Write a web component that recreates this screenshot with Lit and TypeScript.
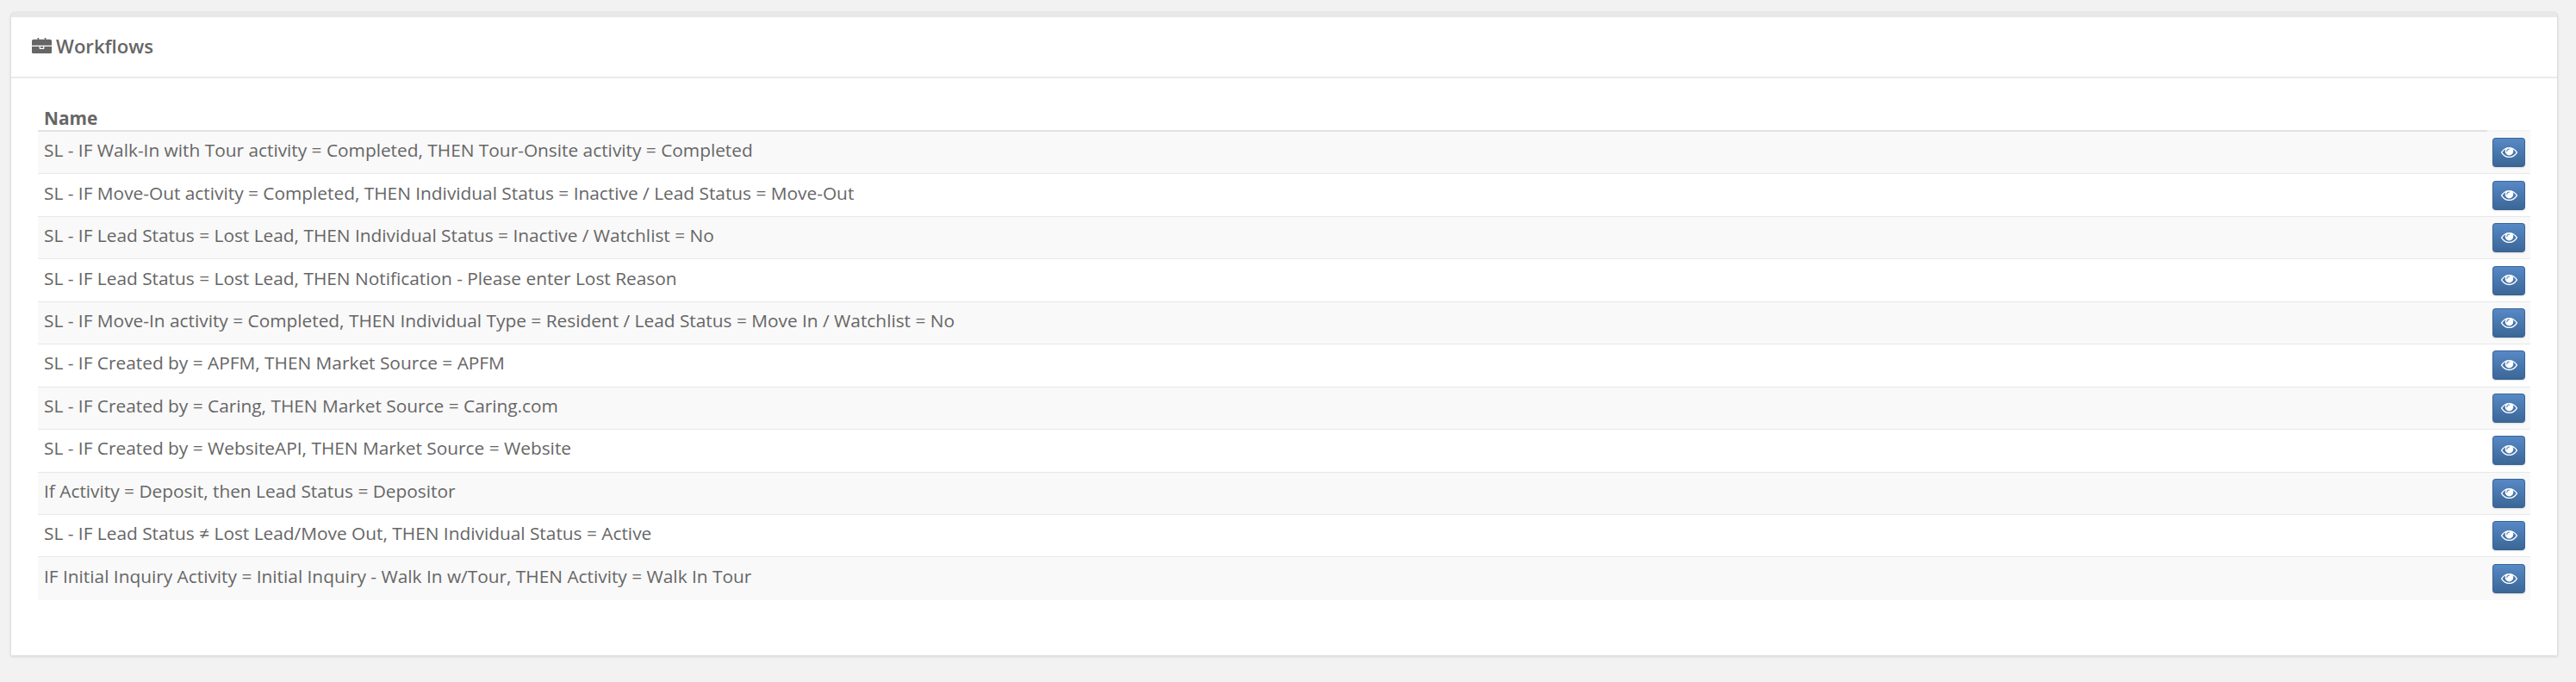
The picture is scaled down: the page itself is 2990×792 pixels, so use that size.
import { LitElement, css, html } from "lit";
import { customElement } from "lit/decorators.js";

const WORKFLOWS = [
  "SL - IF Walk-In with Tour activity = Completed, THEN Tour-Onsite activity = Completed",
  "SL - IF Move-Out activity = Completed, THEN Individual Status = Inactive / Lead Status = Move-Out",
  "SL - IF Lead Status = Lost Lead, THEN Individual Status = Inactive / Watchlist = No",
  "SL - IF Lead Status = Lost Lead, THEN Notification - Please enter Lost Reason",
  "SL - IF Move-In activity = Completed, THEN Individual Type = Resident / Lead Status = Move In / Watchlist = No",
  "SL - IF Created by = APFM, THEN Market Source = APFM",
  "SL - IF Created by = Caring, THEN Market Source = Caring.com",
  "SL - IF Created by = WebsiteAPI, THEN Market Source = Website",
  "If Activity = Deposit, then Lead Status = Depositor",
  "SL - IF Lead Status ≠ Lost Lead/Move Out, THEN Individual Status = Active",
  "IF Initial Inquiry Activity = Initial Inquiry - Walk In w/Tour, THEN Activity = Walk In Tour",
];

const briefcase = html`<svg class="case" viewBox="0 128 1792 1408" preserveAspectRatio="none" aria-hidden="true">
  <path fill="currentColor" d="M640 256h512v-128h-512v128zm1152 640v480q0 66-47 113t-113 47h-1472q-66 0-113-47t-47-113v-480h672v160q0 26 19 45t45 19h320q26 0 45-19t19-45v-160h672zm-768 0v128h-256v-128h256zm768-480v384h-1792v-384q0-66 47-113t113-47h352v-160q0-40 28-68t68-28h576q40 0 68 28t28 68v160h352q66 0 113 47t47 113z"/>
</svg>`;

const eye = html`<svg class="eye" viewBox="0 384 1792 1152" aria-hidden="true">
  <path fill="currentColor" d="M1664 960q-152-236-381-353 61 104 61 225 0 185-131.5 316.5t-316.5 131.5-316.5-131.5-131.5-316.5q0-121 61-225-229 117-381 353 133 205 333.5 326.5t434.5 121.5 434.5-121.5 333.5-326.5zm-720-384q0-20-14-34t-34-14q-125 0-214.5 89.5t-89.5 214.5q0 20 14 34t34 14 34-14 14-34q0-86 61-147t147-61q20 0 34-14t14-34zm848 384q0 34-20 69-140 230-376.5 368.5t-499.5 138.5-499.5-139-376.5-368q-20-35-20-69t20-69q140-229 376.5-368t499.5-139 499.5 139 376.5 368q20 35 20 69z"/>
</svg>`;

@customElement("app-root")
export class AppRoot extends LitElement {
  static styles = css`
    :host {
      display: block;
      box-sizing: border-box;
      height: 792px;
      overflow: hidden;
      padding: 13px 21px 0 12px;
      background: #f2f2f2;
      color: #666;
      font-family: "Open Sans", sans-serif;
      font-size: 20.85px;
    }

    .card {
      background: #fff;
      border-top: 7px solid #e7e8e9;
      border-left: 1px solid #e0e0e0;
      border-right: 1px solid #dcdcdc;
      border-radius: 5px 5px 0 0;
      box-shadow: 0 2px 3px rgba(0, 0, 0, 0.1);
    }

    .card-head {
      display: flex;
      align-items: center;
      gap: 5px;
      box-sizing: border-box;
      height: 71px;
      padding: 0 0 3px 24px;
      border-bottom: 2px solid #ebebeb;
      font-size: 22.1px;
      font-weight: 600;
    }

    .case {
      width: 23px;
      height: 18.5px;
    }

    .card-body {
      padding: 26px 31px 64px;
    }

    .table-head {
      display: flex;
      height: 36px;
      font-weight: 700;
      line-height: 28px;
    }

    .th-name {
      display: flex;
      align-items: flex-end;
      flex: 1;
      box-sizing: border-box;
      padding-left: 7px;
      border-bottom: 2px solid #e2e2e2;
    }

    .th-action {
      box-sizing: border-box;
      width: 50px;
      border-bottom: 2px solid #f4f4f4;
    }

    .row {
      display: flex;
      align-items: center;
      justify-content: space-between;
      box-sizing: border-box;
      height: 49.45px;
      padding: 0 6px 0 7px;
      border-bottom: 1px solid #e8e8e8;
    }

    .row:nth-child(even) {
      background: #f9f9f9;
    }

    .row:last-child {
      border-bottom: 0;
    }

    .name {
      padding-bottom: 6px;
    }

    button {
      display: flex;
      align-items: center;
      justify-content: center;
      box-sizing: border-box;
      width: 38px;
      height: 34px;
      padding: 0;
      border: 1px solid #3a6597;
      border-bottom-color: #38628f;
      border-radius: 4px;
      background: linear-gradient(#5789c6, #3b6697);
      box-shadow: 0 1px 2px rgba(0, 0, 0, 0.12);
      color: #fff;
    }

    .eye {
      width: 19px;
      height: 12.2px;
    }
  `;

  render() {
    return html`
      <section class="card">
        <header class="card-head">${briefcase}<span>Workflows</span></header>
        <div class="card-body">
          <div class="table">
            <div class="table-head">
              <div class="th-name">Name</div>
              <div class="th-action"></div>
            </div>
            ${WORKFLOWS.map(
              (name) => html`
                <div class="row">
                  <span class="name">${name}</span>
                  <button type="button" aria-label="View">${eye}</button>
                </div>
              `,
            )}
          </div>
        </div>
      </section>
    `;
  }
}

declare global {
  interface HTMLElementTagNameMap {
    "app-root": AppRoot;
  }
}
